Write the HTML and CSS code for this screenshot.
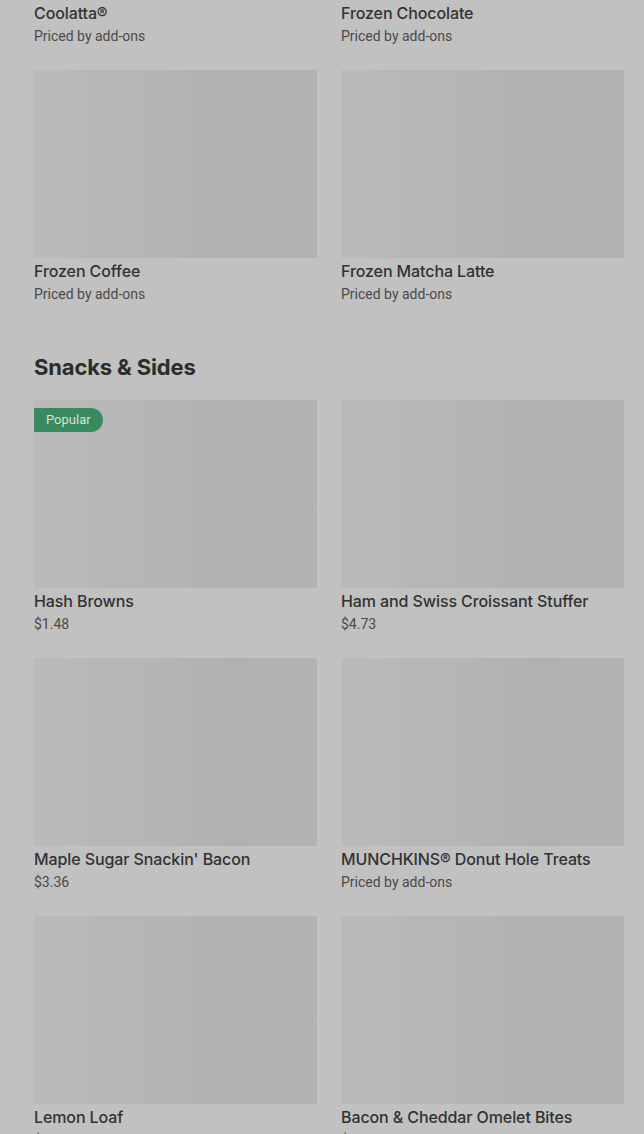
FILE: index.html
```html
<!DOCTYPE html>
<html>
<head>
<meta charset="utf-8">
<link rel="stylesheet" href="styles.css">
</head>
<body>
<div class="page">
  <section class="section first">
    <div class="grid">
      <div class="card"><div class="thumb"></div><div class="name">Coolatta®</div><div class="price">Priced by add-ons</div></div>
      <div class="card"><div class="thumb"></div><div class="name">Frozen Chocolate</div><div class="price">Priced by add-ons</div></div>
      <div class="card"><div class="thumb"></div><div class="name">Frozen Coffee</div><div class="price">Priced by add-ons</div></div>
      <div class="card"><div class="thumb"></div><div class="name">Frozen Matcha Latte</div><div class="price">Priced by add-ons</div></div>
    </div>
  </section>
  <section class="section">
    <h2 class="heading">Snacks &amp; Sides</h2>
    <div class="grid">
      <div class="card"><div class="thumb"><span class="badge">Popular</span></div><div class="name">Hash Browns</div><div class="price">$1.48</div></div>
      <div class="card"><div class="thumb"></div><div class="name">Ham and Swiss Croissant Stuffer</div><div class="price">$4.73</div></div>
      <div class="card"><div class="thumb"></div><div class="name">Maple Sugar Snackin' Bacon</div><div class="price">$3.36</div></div>
      <div class="card"><div class="thumb"></div><div class="name">MUNCHKINS® Donut Hole Treats</div><div class="price">Priced by add-ons</div></div>
      <div class="card"><div class="thumb"></div><div class="name">Lemon Loaf</div><div class="price">$2.99</div></div>
      <div class="card"><div class="thumb"></div><div class="name">Bacon &amp; Cheddar Omelet Bites</div><div class="price">$4.49</div></div>
    </div>
  </section>
</div>
</body>
</html>
```
FILE: styles.css
```css
html, body {
  margin: 0;
  padding: 0;
  background: #c1c1c1;
  overflow: hidden;
}
body {
  font-family: "Inter", "Roboto", "Liberation Sans", sans-serif;
  color: #2e2e2e;
}
.page {
  padding: 0 20px 0 34px;
}
.section.first {
  margin-top: -188px;
}
.heading {
  margin: 48px 0 18px;
  font-size: 22px;
  line-height: 30px;
  font-weight: 700;
  letter-spacing: -0.15px;
  color: #2c2c2c;
}
.grid {
  display: grid;
  grid-template-columns: 283px 283px;
  column-gap: 24px;
  row-gap: 24px;
}
.card {
  display: flex;
  flex-direction: column;
}
.thumb {
  position: relative;
  height: 188px;
  background: linear-gradient(90deg, #bababa 0%, #b6b6b6 35%, #b1b1b1 70%, #b3b3b3 100%);
}
.badge {
  position: absolute;
  top: 8px;
  left: 0;
  height: 24px;
  line-height: 24px;
  padding: 0 12px;
  font-family: "Roboto", "Liberation Sans", sans-serif;
  font-size: 13px;
  color: #d3e5d9;
  background: #3a8a5f;
  border-radius: 0 12px 12px 0;
}
.name {
  padding-top: 1px;
  font-size: 16px;
  line-height: 24px;
  font-weight: 500;
  color: #323232;
  letter-spacing: -0.1px;
}
.price {
  margin-bottom: -1px;
  font-family: "Roboto", "Liberation Sans", sans-serif;
  font-size: 14px;
  line-height: 22px;
  color: #4a4a4a;
}
```
